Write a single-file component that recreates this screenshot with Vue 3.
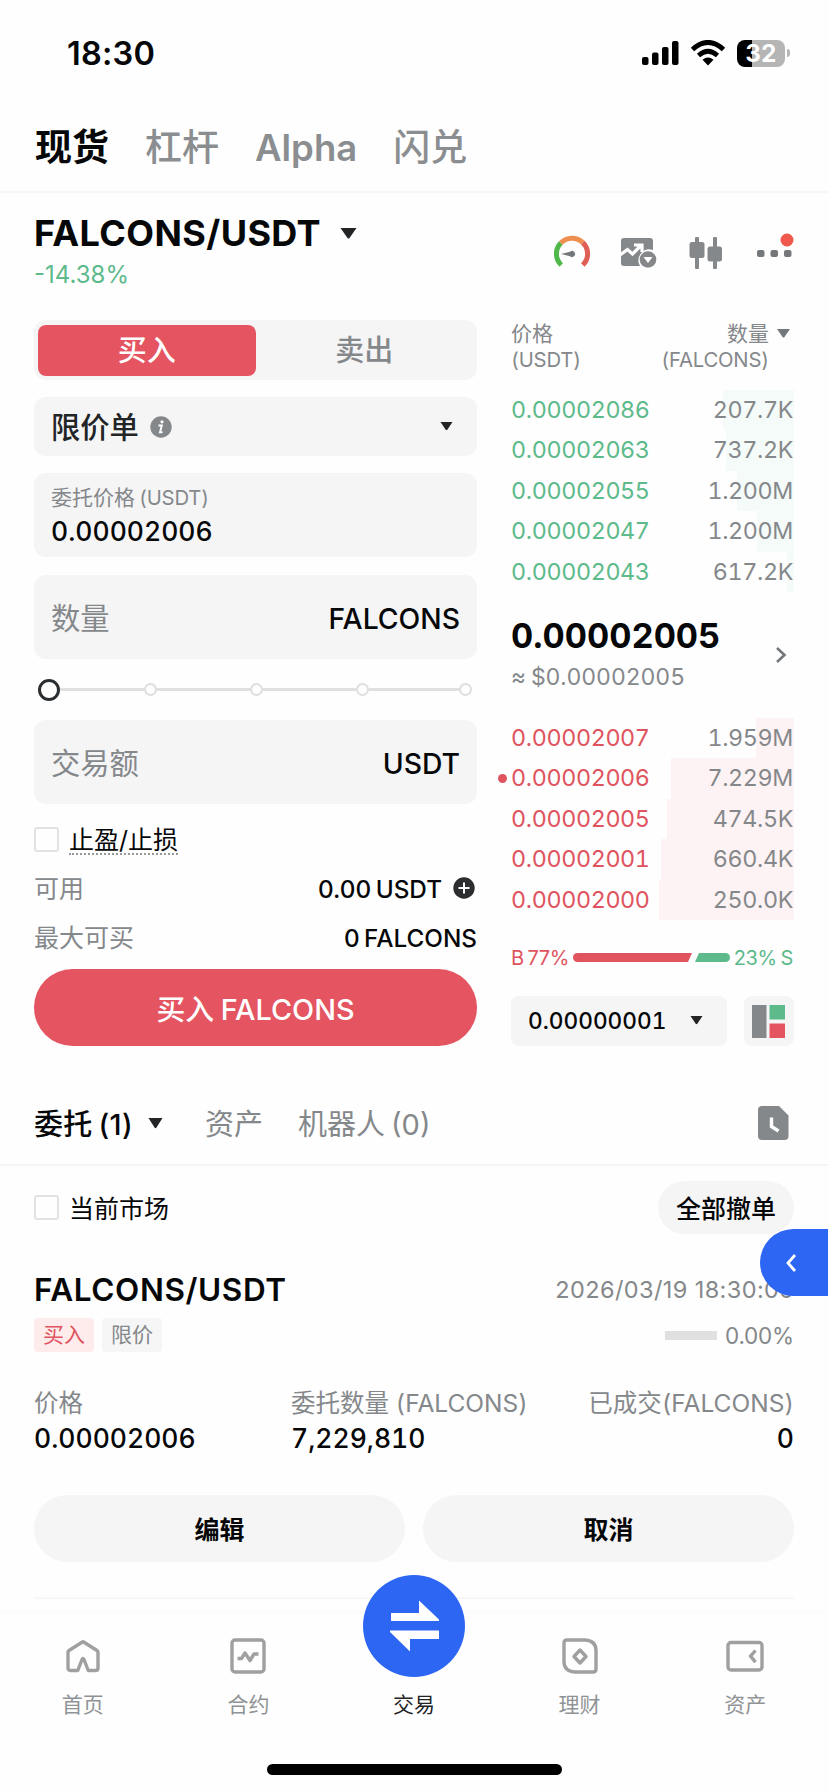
<script setup>
const asks = [
  { price: '0.00002086', qty: '207.7K', depth: 71 },
  { price: '0.00002063', qty: '737.2K', depth: 68 },
  { price: '0.00002055', qty: '1.200M', depth: 57 },
  { price: '0.00002047', qty: '1.200M', depth: 37 },
  { price: '0.00002043', qty: '617.2K', depth: 7 },
]
const bids = [
  { price: '0.00002007', qty: '1.959M', depth: 38 },
  { price: '0.00002006', qty: '7.229M', depth: 123, own: true },
  { price: '0.00002005', qty: '474.5K', depth: 127 },
  { price: '0.00002001', qty: '660.4K', depth: 133 },
  { price: '0.00002000', qty: '250.0K', depth: 135 },
]
</script>

<template>
  <div class="page">
    <header class="status">
      <span class="time">18:30</span>
      <svg class="signal" width="38" height="26" viewBox="0 0 38 26">
        <rect x="1" y="17" width="6.5" height="8" rx="2" />
        <rect x="11" y="12.500" width="6.500" height="12.500" rx="2" />
        <rect x="21" y="7" width="6.500" height="18" rx="2" />
        <rect x="31" y="1" width="6.500" height="24" rx="2" />
      </svg>
      <svg class="wifi" width="36" height="26" viewBox="0 0 36 26">
        <path d="M2.500 9.500Q18-4.500 33.500 9.500" fill="none" stroke="#000" stroke-width="5" />
        <path d="M8.500 15.500Q18 7 27.500 15.500" fill="none" stroke="#000" stroke-width="4.600" />
        <path d="M12.500 19.800Q18 15 23.500 19.800L18 25.500Z" />
      </svg>
      <div class="battery"><span>32</span></div>
      <i class="nub"></i>
    </header>

    <nav class="tabs">
      <span class="on">现货</span><span>杠杆</span><span class="alpha">Alpha</span><span>闪兑</span>
    </nav>

    <section class="pair">
      <div>
        <div class="symbol"><b>FALCONS/USDT</b><svg width="17" height="11" viewBox="0 0 17 11"><path d="M0.500 0h16L9.500 10q-1 1-2 0z" fill="#222426" /></svg></div>
        <div class="change">-14.38%</div>
      </div>
      <div class="tools">
        <svg width="36" height="36" viewBox="0 0 36 36" fill="none" stroke-width="5">
          <path d="M7.200 30A15.500 15.500 0 0 1 6.800 8" stroke="#4fb848" />
          <path d="M6.800 8A15.500 15.500 0 0 1 28.800 7.600" stroke="#ee8f50" />
          <path d="M28.800 7.600A15.500 15.500 0 0 1 28.800 30" stroke="#df5f56" />
          <path d="M7 19l9-2.200a3 3 0 1 1 0 4.400z" fill="#74787b" />
        </svg>
        <svg width="37" height="36" viewBox="0 0 37 36">
          <path d="M4 3h26q3 0 3 3v9a11 11 0 0 0-13 16H4q-3 0-3-3V6q0-3 3-3z" fill="#85888b" />
          <path d="M0 20l7.500-5.500 5 4.500 8.500-8.500M14 10h8v7" fill="none" stroke="#fff" stroke-width="3.200" />
          <circle cx="28" cy="24.500" r="8.300" fill="#85888b" />
          <path d="M23.500 22h9L28 28z" fill="#fff" />
        </svg>
        <svg width="34" height="36" viewBox="0 0 34 36" fill="#85888b">
          <rect x="6" y="2" width="4" height="32" rx="1" /><rect x="0.500" y="7" width="15" height="16" rx="2.500" />
          <rect x="24" y="2" width="4" height="32" rx="1" /><rect x="18.500" y="11.500" width="14.500" height="15" rx="2.500" />
        </svg>
        <svg class="more" width="38" height="36" viewBox="0 0 38 36">
          <g fill="#74787b"><rect x="0" y="15" width="7.500" height="7" rx="2" /><rect x="13.500" y="15" width="7.500" height="7" rx="2" /><rect x="27" y="15" width="7.500" height="7" rx="2" /></g>
          <circle cx="30" cy="5" r="6.500" fill="#f05a4c" />
        </svg>
      </div>
    </section>

    <main class="trade">
      <section class="form">
        <div class="side"><span class="buy">买入</span><span class="sell">卖出</span></div>
        <div class="box type">
          <span>限价单</span>
          <svg class="info" width="22" height="22" viewBox="0 0 22 22"><circle cx="11" cy="11" r="10.700" fill="#85888b" /><circle cx="12" cy="5.800" r="1.600" fill="#fff" /><path d="M8.500 9.500h3.300L10 16.300h2.500" fill="none" stroke="#fff" stroke-width="1.900" /></svg>
          <svg width="13" height="9" viewBox="0 0 13 9"><path d="M0.500 0h12L7.300 7.800q-.8.900-1.600 0z" fill="#222426" /></svg>
        </div>
        <div class="box price">
          <span class="cap">委托价格<i></i><small>(USDT)</small></span>
          <span class="val">0.00002006</span>
        </div>
        <div class="box field"><span>数量</span><em>FALCONS</em></div>
        <div class="slider"><b></b><u class="first"></u><i></i><u></u><i></i><u></u><i></i><u class="end"></u><i></i></div>
        <div class="box field"><span>交易额</span><em class="usdt">USDT</em></div>
        <div class="check"><i class="tick"></i><span class="dotted">止盈/止损</span></div>
        <div class="line"><span>可用</span><em>0.00 USDT</em><svg width="22" height="22" viewBox="0 0 22 22"><circle cx="11" cy="11" r="10.700" fill="#2b2e31" /><path d="M5.500 11h11M11 5.500v11" stroke="#fff" stroke-width="2" /></svg></div>
        <div class="line"><span>最大可买</span><em>0 FALCONS</em></div>
        <button class="submit">买入 FALCONS</button>
      </section>

      <section class="book">
        <div class="head">
          <div>价格<br /><small>(USDT)</small></div>
          <div class="amt">数量<svg width="13" height="9" viewBox="0 0 13 9"><path d="M0 0h13L7.500 8q-1 1-2 0z" fill="#74787b" /></svg><br /><small>(FALCONS)</small></div>
        </div>
        <div class="rows ask">
          <div v-for="r in asks" :key="r.price" class="row">
            <i class="depth" :style="{ width: r.depth + 'px' }"></i><span>{{ r.price }}</span><em>{{ r.qty }}</em>
          </div>
        </div>
        <div class="last">
          <div><b>0.00002005</b><span>≈ $0.00002005</span></div>
          <svg width="12" height="18" viewBox="0 0 12 18"><path d="M2 2l7.500 7L2 16" fill="none" stroke="#74787b" stroke-width="2.600" /></svg>
        </div>
        <div class="rows bid">
          <div v-for="r in bids" :key="r.price" class="row">
            <i class="depth" :style="{ width: r.depth + 'px' }"></i><i v-if="r.own" class="own"></i><span>{{ r.price }}</span><em>{{ r.qty }}</em>
          </div>
        </div>
        <div class="ratio">
          <span class="red">B 77%</span>
          <svg width="157" height="9" viewBox="0 0 157 9"><path d="M4.500 0H119l-4 9H4.500a4.500 4.500 0 0 1 0-9z" fill="#df545f" /><path d="M126 0h26.500a4.500 4.500 0 0 1 0 9H122z" fill="#5dba8b" /></svg>
          <span class="green">23% S</span>
        </div>
        <div class="bottom">
          <div class="step">0.00000001<svg width="13" height="9" viewBox="0 0 13 9"><path d="M0.500 0h12L7.300 7.800q-.8.900-1.600 0z" fill="#222426" /></svg></div>
          <div class="layout"><svg width="33" height="33" viewBox="0 0 33 33"><path d="M0 0h14.500v33H0z" fill="#85888b" /><path d="M17.500 0H33v14.500H17.500z" fill="#5dba8b" /><path d="M17.500 18.500H33V33H17.500z" fill="#e45561" /></svg></div>
        </div>
      </section>
    </main>

    <nav class="otabs">
      <span class="on">委托<i></i>(1)</span>
      <svg width="15" height="11" viewBox="0 0 15 11"><path d="M0.500 0h14L8.500 9.600q-1 1.200-2 0z" fill="#222426" /></svg>
      <span class="assets">资产</span><span class="bots">机器人<i></i>(0)</span>
      <svg class="doc" width="31" height="34" viewBox="0 0 31 34"><path d="M4 0h17l9.500 9.500V30q0 4-4 4H4q-4 0-4-4V4q0-4 4-4z" fill="#85888b" /><path d="M13.500 11.500v9l7 4.500" fill="none" stroke="#fff" stroke-width="3.400" /></svg>
    </nav>

    <section class="orders">
      <div class="filter"><i class="tick"></i><span>当前市场</span><button>全部撤单</button></div>
      <div class="title"><b>FALCONS/USDT</b><span>2026/03/19 18:30:05</span></div>
      <div class="tags"><span class="t-buy">买入</span><span class="t-limit">限价</span><i></i><em>0.00%</em></div>
      <div class="stats">
        <div><span>价格</span><b>0.00002006</b></div>
        <div><span>委托数量 (FALCONS)</span><b>7,229,810</b></div>
        <div class="done"><span>已成交(FALCONS)</span><b>0</b></div>
      </div>
      <div class="acts"><button>编辑</button><button>取消</button></div>
      <hr />
    </section>

    <div class="drawer"><svg width="12" height="20" viewBox="0 0 12 20"><path d="M10 2L3 10l7 8" fill="none" stroke="#fff" stroke-width="2.800" /></svg></div>

    <footer class="nav">
      <div><svg width="36" height="36" viewBox="0 0 36 36"><path d="M17 4.200q1-.7 2 0L32 12.500q1 .7 1 2V30q0 2.500-2.500 2.500h-7.300L19 21.500q-1-2-2 0L12.800 32.500H5.500Q3 32.500 3 30V14.500q0-1.300 1-2z" /></svg><span>首页</span></div>
      <div><svg width="36" height="36" viewBox="0 0 36 36"><rect x="2" y="2" width="32" height="32" rx="3" /><path d="M7.500 20.500h4L15 15l5 7.500 4-6.500h4.500" /></svg><span>合约</span></div>
      <div class="mid">
        <i class="orb"><svg width="50" height="52" viewBox="0 0 50 52"><path d="M1 13h28V0.500L49 19.500V21H1z" /><path d="M49 30.500H0V32l20 19.500V39h29z" /></svg></i>
        <span>交易</span>
      </div>
      <div><svg width="36" height="36" viewBox="0 0 36 36"><path d="M5 2h18.500Q34 3 34 12.500V31q0 3-3 3H12.500Q2 33 2 23.500V5q0-3 3-3z" /><path d="M18 12l6 6.500-6 6.500-6-6.500z" /></svg><span>理财</span></div>
      <div><svg width="38" height="36" viewBox="0 0 38 36"><rect x="2" y="4.500" width="34" height="27.500" rx="3" /><path d="M29.500 12.500L24.500 18.200l5 6" /></svg><span>资产</span></div>
    </footer>
    <div class="home"></div>
  </div>
</template>

<style>
body { margin: 0; background: #fefefe; }
</style>

<style scoped>
.page {
  position: relative; width: 828px; height: 1792px; overflow: hidden; background: #fefefe;
  font-family: Inter, "Noto Sans CJK SC", sans-serif; font-variant-numeric: tabular-nums; color: #060708; white-space: nowrap;
  display: flex; flex-direction: column; box-sizing: border-box;
}
* { box-sizing: border-box; }
em, i { font-style: normal; }
u { text-decoration: none; }
svg { display: block; flex: none; }
button { border: 0; font-family: inherit; padding: 0; color: inherit; }

.status { height: 106px; display: flex; align-items: center; padding-left: 67px; flex: none; }
.time { width: 574px; font-size: 32.500px; font-weight: 600; font-variant-numeric: normal; letter-spacing: .2px; }
.wifi { margin-left: 11px; }
.battery { width: 48px; height: 27px; margin-left: 11px; border-radius: 8px; background: linear-gradient(90deg, #000 15px, #b5b5b5 15px); color: #fff; font-size: 24px; font-weight: 700; line-height: 27px; text-align: center; }
.nub { width: 3px; height: 8px; border-radius: 0 4px 4px 0; background: #b5b5b5; margin-left: 2px; }

.tabs { height: 87px; border-bottom: 2px solid #f7f7f7; flex: none; display: flex; gap: 36px; padding: 17px 0 0 35px; font-size: 37px; line-height: 50px; font-weight: 500; color: #8b8e90; }
.tabs .on { color: #060708; font-weight: 700; }
.alpha { font-weight: 600; font-size: 36.500px; }

.pair { height: 127px; flex: none; display: flex; justify-content: space-between; padding: 20px 33px 0 34px; }
.symbol { display: flex; align-items: center; height: 40px; gap: 19px; font-size: 36px; letter-spacing: .4px; }
.change { margin-top: 7px; font-size: 24px; line-height: 30px; color: #5dba8b; font-variant-numeric: normal; }
.tools { display: flex; padding-top: 22px; }
.tools svg:nth-child(2) { margin-left: 30px; }
.tools svg:nth-child(3) { margin-left: 32px; }
.tools svg:nth-child(4) { margin-left: 34px; }
.more { overflow: visible; }

.trade { display: flex; height: 743px; flex: none; padding: 0 34px; justify-content: space-between; }
.form { width: 443px; display: flex; flex-direction: column; }
.side { display: flex; height: 60px; background: #f5f5f6; border-radius: 12px; padding: 5px 4px 4px; font-size: 29px; line-height: 51px; text-align: center; }
.side span { flex: 1; }
.buy { background: #e45561; color: #fff; border-radius: 8px; font-weight: 500; }
.sell { color: #85888b; font-weight: 500; }
.box { background: #f5f5f6; border-radius: 12px; padding: 0 17px; }
.type { margin-top: 17px; height: 59px; display: flex; align-items: center; font-size: 29.300px; font-weight: 500; color: #222426; padding-right: 24px; }
.type span { margin-top: -3px; }
.info { margin: 0 auto 0 11px; }
.price { margin-top: 17px; height: 84px; padding-top: 11px; }
.price span { display: block; }
.cap { font-size: 21px; line-height: 28px; color: #85888b; }
.cap i { display: inline-block; width: 4px; }
small { font-size: 20.300px; letter-spacing: -.2px; }
.val { font-size: 26.500px; line-height: 38px; font-weight: 500; }
.field { margin-top: 18px; height: 84px; display: flex; justify-content: space-between; align-items: center; font-size: 29.300px; color: #85888b; }
.field span { margin-top: -2px; }
.field em { color: #060708; font-size: 28.300px; font-weight: 500; margin-top: 3px; }
.slider { display: flex; align-items: center; height: 61px; padding: 0 5px 0 4px; margin-bottom: -18px; }
.slider b { width: 22px; height: 22px; border: 3px solid #2b2e31; border-radius: 50%; }
.slider i { width: 13px; height: 13px; border: 2px solid #dedede; border-radius: 50%; }
.slider u { flex: 93; height: 3px; background: #e0e0e0; }
.slider .first { flex: 84; }
.slider .end { flex: 90; }
.check { display: flex; align-items: center; margin-top: 16px; height: 38px; font-size: 25px; }
.tick { width: 25px; height: 25px; border: 2px solid #e2e2e2; border-radius: 3px; }
.dotted { margin-left: 10px; line-height: 34px; height: 32px; border-bottom: 2px dotted #999; }
.line { display: flex; align-items: center; height: 49px; font-size: 25px; color: #85888b; }
.check + .line { margin-top: 5px; }
.line span { margin-top: -2px; }
.line em { color: #060708; font-size: 24.300px; font-weight: 500; margin-left: auto; margin-top: 2px; word-spacing: -2px; font-variant-numeric: normal; }
.line svg { margin: 0 2px 0 11px; }
.submit { margin-top: 8px; height: 77px; border-radius: 39px; background: #e45561; color: #fff; font-size: 28.800px; font-weight: 500; word-spacing: -1px; padding-bottom: 1px; }

.book { width: 283px; font-size: 23.300px; letter-spacing: -.36px; }
.head { display: flex; justify-content: space-between; padding-top: 1px; height: 70px; font-size: 21px; line-height: 25.500px; color: #85888b; letter-spacing: 0; }
.amt { text-align: right; padding-right: 25px; }
.amt svg { display: inline-block; margin: 0 -21px 3px 8px; }
.row { position: relative; display: flex; justify-content: space-between; height: 40.400px; line-height: 40px; padding-right: 1px; }
.row span { position: relative; }
.row em { position: relative; color: #85888b; }
.depth { position: absolute; right: 0; top: 0; bottom: 0; }
.ask { color: #5dba8b; }
.ask .depth { background: #f5fbf9; }
.bid { color: #df545f; }
.bid .depth { background: #fdf3f4; }
.own { position: absolute; left: -13px; top: 16px; width: 9px; height: 9px; border-radius: 50%; background: #df545f; }
.last { display: flex; justify-content: space-between; align-items: center; height: 126px; padding: 0 7px 0 0; }
.last svg { margin-top: 1px; }
.last b { display: block; font-size: 34.400px; letter-spacing: 0; line-height: 44px; }
.last span { display: block; font-size: 23px; line-height: 38px; color: #85888b; word-spacing: -1px; letter-spacing: -.1px; }
.ratio { display: flex; align-items: center; justify-content: space-between; height: 76px; font-size: 20px; word-spacing: -1.500px; font-variant-numeric: normal; padding-right: 1px; }
.red { color: #df545f; }
.green { color: #5dba8b; }
.bottom { display: flex; justify-content: space-between; }
.step { letter-spacing: 0; width: 216px; height: 50px; border-radius: 8px; background: #f5f5f6; padding: 0 24px 0 17px; display: flex; justify-content: space-between; align-items: center; font-weight: 500; font-size: 22.700px; }
.layout { width: 50px; height: 50px; border-radius: 8px; background: #f5f5f6; padding: 9px 8px; }

.otabs { height: 103px; flex: none; border-bottom: 2px solid #f5f5f5; display: flex; align-items: center; padding: 19px 39px 0 34px; font-size: 29px; color: #85888b; font-variant-numeric: normal; }
.otabs span { margin-top: -3px; }
.otabs i { display: inline-block; width: 6px; }
.otabs .on { color: #060708; font-weight: 500; width: 102px; margin-right: 12px; letter-spacing: .3px; }
.otabs .assets { margin-left: 42px; }
.otabs .bots { margin-right: auto; margin-left: 35px; }

.orders { padding: 0 34px; }
.filter { display: flex; align-items: center; height: 53px; margin-top: 15px; font-size: 25px; }
.filter span { margin: -2px 0 0 10px; }
.filter button { margin-left: auto; width: 136px; height: 53px; border-radius: 27px; background: #f5f5f6; font-size: 25px; font-weight: 500; padding-bottom: 2px; }
.title { display: flex; justify-content: space-between; align-items: center; margin-top: 35px; height: 40px; font-size: 23.500px; letter-spacing: .4px; color: #85888b; font-variant-numeric: normal; }
.title b { font-size: 31.500px; font-weight: 600; letter-spacing: .6px; color: #060708; }
.tags { display: flex; align-items: center; margin-top: 9px; height: 34px; font-size: 21px; }
.tags span { width: 60px; height: 34px; line-height: 34px; border-radius: 4px; text-align: center; margin-right: 8px; }
.t-buy { background: #fdeceb; color: #df545f; }
.t-limit { background: #f6f6f7; color: #85888b; }
.tags i { width: 52px; height: 9px; background: #e0e0e0; margin: 0 8px 0 auto; }
.tags em { font-size: 22.500px; letter-spacing: -.2px; font-variant-numeric: normal; color: #85888b; }
.stats { display: grid; grid-template-columns: 257px 1fr auto; margin-top: 33px; }
.stats span { display: block; font-size: 24.500px; line-height: 36px; color: #85888b; }
.stats b { display: block; font-size: 26.500px; line-height: 34px; font-weight: 500; }
.done { text-align: right; }
.acts { display: grid; grid-template-columns: 1fr 1fr; gap: 18px; margin-top: 40px; }
.acts button { height: 67px; border-radius: 34px; background: #f5f5f6; font-size: 25px; font-weight: 700; padding-bottom: 1px; }
hr { border: 0; height: 2px; background: #f7f7f7; margin: 35px 0 0; }

.drawer { position: absolute; right: 0; top: 1229px; width: 68px; height: 67px; border-radius: 34px 0 0 34px; background: #2d66f3; padding: 24px 0 0 25px; }

.nav { position: absolute; left: 0; right: 0; bottom: 0; height: 178px; background: #fefefe; box-shadow: 0 -2px 8px rgba(0, 0, 0, .025); display: grid; grid-template-columns: repeat(5, 1fr); }
.nav div { display: flex; flex-direction: column; align-items: center; padding-top: 24px; font-size: 21px; line-height: 30px; color: #909395; }
.nav div > svg { fill: none; stroke: #a0a0a0; stroke-width: 3.400; stroke-linejoin: round; }
.nav span { margin-top: 16px; }
.nav .mid { padding-top: 0; color: #222426; }
.orb { width: 102px; height: 102px; margin-top: -39px; border-radius: 50%; background: #2d66f3; display: flex; align-items: center; justify-content: center; }
.orb svg { fill: #fff; margin-left: 3px; }
.nav .mid span { margin-top: 13px; }
.home { position: absolute; left: 267px; bottom: 17px; width: 295px; height: 11px; border-radius: 6px; background: #000; }
</style>
